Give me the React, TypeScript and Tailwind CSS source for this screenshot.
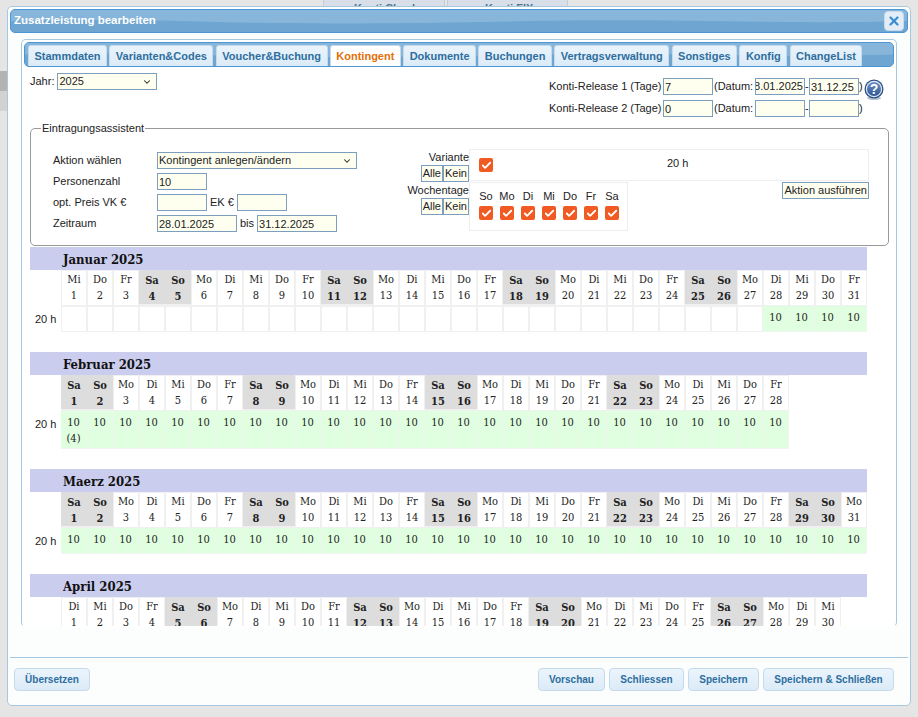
import { Check, ChevronDown, X } from "lucide-react";

const tabs = ["Stammdaten", "Varianten&Codes", "Voucher&Buchung", "Kontingent", "Dokumente", "Buchungen", "Vertragsverwaltung", "Sonstiges", "Konfig", "ChangeList"];
const dayNames = ["So", "Mo", "Di", "Mi", "Do", "Fr", "Sa"];

const months = [
  { title: "Januar 2025", start: 3, days: 31, firstValue: 28 },
  { title: "Februar 2025", start: 6, days: 28, firstValue: 1, note: "(4)" },
  { title: "Maerz 2025", start: 6, days: 31, firstValue: 1 },
  { title: "April 2025", start: 2, days: 30, firstValue: 1 },
];

function Wave() {
  return (
    <svg viewBox="0 0 900 24" preserveAspectRatio="none" className="absolute inset-0 h-full w-full">
      <path d="M0 0H900V12C780 16 660 9 520 12C400 15 280 16 170 12C100 10 50 11 0 12Z" fill="#87b6da" />
    </svg>
  );
}

function Field({ value = "", className = "w-[50px]" }: { value?: string; className?: string }) {
  return (
    <input
      readOnly
      value={value}
      className={`h-[17px] border border-[#7c9ebf] bg-[#ffffef] px-[1px] text-[11px] leading-none text-[#222] outline-none ${className}`}
    />
  );
}

function SelectBox({ value, className }: { value: string; className: string }) {
  return (
    <div className={`flex h-[17px] items-center justify-between border border-[#7c9ebf] bg-[#ffffef] pl-[1px] pr-[4px] text-[11px] text-[#222] ${className}`}>
      <span>{value}</span>
      <ChevronDown className="h-[10px] w-[10px] text-[#222]" strokeWidth={2.5} />
    </div>
  );
}

function MiniButton({ label }: { label: string }) {
  return (
    <span className="flex h-[17px] items-center justify-center border border-[#7c9ebf] bg-[#ffffef] px-[1px] text-[11px] text-[#222]">
      {label}
    </span>
  );
}

function OrangeCheck() {
  return (
    <span className="flex h-[14px] w-[14px] items-center justify-center rounded-[2px] bg-[#f15a22]">
      <Check className="h-[11px] w-[11px] text-white" strokeWidth={4} />
    </span>
  );
}

function FooterButton({ label, className }: { label: string; className: string }) {
  return (
    <button className={`flex h-[23px] items-center justify-center rounded-[4px] border border-[#c5dbec] bg-gradient-to-b from-[#eaf4fc] to-[#dcebf8] text-[10px] font-bold text-[#2e6e9e] ${className}`}>
      {label}
    </button>
  );
}

function HelpIcon() {
  return (
    <svg viewBox="0 0 20 21" className="absolute right-[10px] top-[12px] h-[21px] w-[20px]">
      <defs>
        <linearGradient id="help-fill" x1="0" y1="0" x2="0" y2="1">
          <stop offset="0" stopColor="#6f93c4" />
          <stop offset="1" stopColor="#2c5592" />
        </linearGradient>
      </defs>
      <ellipse cx="10" cy="19" rx="7" ry="2" fill="#b9c3d0" />
      <circle cx="10" cy="10" r="9.5" fill="#2a5088" />
      <circle cx="10" cy="10" r="8.2" fill="#dfe8f3" />
      <circle cx="10" cy="10" r="7" fill="url(#help-fill)" />
      <text x="10" y="15" textAnchor="middle" fontSize="14" fontWeight="700" fill="#fff" fontFamily="Liberation Sans">?</text>
    </svg>
  );
}

function Month({ title, start, days, firstValue, note }: { title: string; start: number; days: number; firstValue: number; note?: string }) {
  const list = Array.from({ length: days }, (_, i) => i + 1);
  return (
    <div className="mb-[20px] w-[837px] font-['DejaVu_Serif_Condensed','DejaVu_Serif',serif] text-[11px] leading-[16px] text-[#222] font-stretch-condensed">
      <div className="h-[23px] bg-[#cbcdee] pl-[33px] text-[13px] font-bold leading-[25px] text-[#111]">{title}</div>
      <div className="flex pl-[31px]">
        {list.map((d) => {
          const name = dayNames[(start + d - 1) % 7];
          const weekend = name === "Sa" || name === "So";
          return (
            <div
              key={d}
              className={
                weekend
                  ? "h-[36px] w-[26px] shrink-0 border-b-2 border-[#f0f0f0] bg-[#dddddd] pt-[3px] text-center font-bold"
                  : "h-[36px] w-[26px] shrink-0 border border-[#f0f0f0] bg-white pt-[1px] text-center"
              }
            >
              {name}
              <br />
              {d}
            </div>
          );
        })}
      </div>
      <div className="flex items-stretch">
        <div className="w-[31px] shrink-0 pl-[5px] pt-[5px] font-['Liberation_Sans',sans-serif] text-[11px]">20 h</div>
        {list.map((d) => (
          <div
            key={d}
            className={
              d >= firstValue
                ? "min-h-[26px] w-[26px] shrink-0 border-r border-b border-[#f0f5f0] bg-[#e0ffe0] pb-[1px] pt-[4px] text-center"
                : "min-h-[26px] w-[26px] shrink-0 border border-[#f0f0f0] bg-white"
            }
          >
            {d >= firstValue && "10"}
            {d === 1 && note && (
              <>
                <br />
                {note}
              </>
            )}
          </div>
        ))}
      </div>
    </div>
  );
}

function Wizard() {
  return (
    <fieldset className="ml-[6px] h-[124px] w-[859px] rounded-[5px] border border-[#999] font-['Liberation_Sans',sans-serif] text-[11px] text-[#222]">
      <legend className="ml-[10px] px-[1px] leading-[12px]">Eintragungsassistent</legend>
      <div className="flex pt-[15px]">
        <div className="w-[377px] pl-[22px] pt-[3px]">
          <div className="flex h-[21px] items-start">
            <span className="w-[104px]">Aktion wählen</span>
            <SelectBox value="Kontingent anlegen/ändern" className="w-[200px]" />
          </div>
          <div className="flex h-[21px] items-start">
            <span className="w-[104px]">Personenzahl</span>
            <Field value="10" />
          </div>
          <div className="flex h-[21px] items-start">
            <span className="w-[104px]">opt. Preis VK €</span>
            <Field />
            <span className="px-[3px]">EK €</span>
            <Field />
          </div>
          <div className="flex h-[21px] items-start">
            <span className="w-[104px]">Zeitraum</span>
            <Field value="28.01.2025" className="w-[80px]" />
            <span className="px-[3px]">bis</span>
            <Field value="31.12.2025" className="w-[80px]" />
          </div>
        </div>
        <div className="flex w-[61px] flex-col items-end pt-[1px]">
          <span className="h-[15px] leading-[15px]">Variante</span>
          <div className="flex">
            <MiniButton label="Alle" />
            <MiniButton label="Kein" />
          </div>
          <span className="mt-px h-[15px] leading-[15px]">Wochentage</span>
          <div className="flex">
            <MiniButton label="Alle" />
            <MiniButton label="Kein" />
          </div>
        </div>
        <div className="w-[400px]">
          <div className="flex h-[32px] items-center border border-[#eee] pl-[9px]">
            <OrangeCheck />
            <span className="mb-[3px] ml-[174px]">20 h</span>
          </div>
          <div className="mt-px flex items-start justify-between">
            <div className="h-[49px] w-[159px] border border-[#eee] px-[9px] pt-[7px]">
              <div className="flex gap-[7px]">
                {dayNames.map((d) => (
                  <div key={d} className="flex w-[14px] flex-col items-center gap-[3px]">
                    <span className="h-[13px] leading-[13px]">{d}</span>
                    <OrangeCheck />
                  </div>
                ))}
              </div>
            </div>
            <MiniButton label="Aktion ausführen" />
          </div>
        </div>
      </div>
    </fieldset>
  );
}

function ReleaseRow({ label, value, from, to }: { label: string; value: string; from?: string; to?: string }) {
  return (
    <div className="flex h-[22px] items-start whitespace-nowrap leading-[17px]">
      <span className="w-[114px]">{label}</span>
      <Field value={value} />
      <span className="ml-px w-[41px]">(Datum:</span>
      <div className="flex h-[17px] w-[50px] items-center justify-end overflow-hidden border border-[#7c9ebf] bg-[#ffffef] pr-px text-[11px]">
        <span className="shrink-0">{from}</span>
      </div>
      <span className="w-[4px]">-</span>
      <Field value={to ?? ""} />
      <span>)</span>
    </div>
  );
}

export default function App() {
  return (
    <div className="relative h-[717px] w-[918px] overflow-hidden bg-[#e5e5e5] font-['Liberation_Sans',sans-serif]">
      <div className="flex gap-[2px] pl-[323px] text-[11px] font-bold text-[#4f7390]">
        <div className="h-[8px] w-[122px] border-x border-[#c5ccd6] bg-[#d8dfe8] pl-[30px] pt-[3px] leading-[11px]">Konti Check</div>
        <div className="h-[8px] w-[121px] border-x border-[#c5ccd6] bg-[#d8dfe8] pl-[37px] pt-[3px] leading-[11px]">Konti FIX</div>
      </div>
      <div className="mt-[63px] h-[20px] w-[7px] bg-[#b3b3b3]" />
      <div className="h-[20px] w-[7px] bg-[#d2d2d2]" />

      <div className="absolute left-[7px] top-[6px] flex h-[700px] w-[904px] flex-col rounded-[5px] border border-[#a6c9e2] bg-[#fcfefe] p-[2px]">
        <div className="relative flex h-[24px] shrink-0 items-center justify-between overflow-hidden rounded-[5px] border border-[#4b97d5] bg-[#6ea6d1] pl-[3px] pr-[3px]">
          <Wave />
          <span className="relative text-[11.5px] font-bold text-white">Zusatzleistung bearbeiten</span>
          <span className="relative flex h-[20px] w-[20px] items-center justify-center rounded-[4px] border border-[#c5dbec] bg-[#e2edf7]">
            <X className="h-[14px] w-[14px] text-[#3f8fd2]" strokeWidth={4} />
          </span>
        </div>

        <div className="ml-[11px] mt-[6px] h-[588px] w-[876px] shrink-0 overflow-hidden rounded-[5px] border border-[#a6c9e2] border-b-transparent bg-white p-[2px]">
          <div className="relative flex h-[25px] items-end gap-[2.3px] overflow-hidden rounded-[5px] border border-[#4b97d5] bg-[#6ea6d1] pl-[3px]">
            <Wave />
            {tabs.map((t) => (
              <span
                key={t}
                className={
                  t === "Kontingent"
                    ? "relative flex h-[21px] items-center rounded-t-[3px] border border-b-0 border-[#c5dbec] bg-white px-[5.5px] text-[11px] font-bold text-[#e17009]"
                    : "relative flex h-[21px] items-center rounded-t-[3px] border border-b-0 border-[#c5dbec] bg-gradient-to-b from-[#e9f3fb] to-[#dcebf8] px-[5.5px] text-[11px] font-bold text-[#2e6e9e]"
                }
              >
                {t}
              </span>
            ))}
          </div>

          <div className="flex h-[55px] justify-between text-[11px] text-[#222]">
            <div className="box-content flex h-[17px] items-center gap-[3px] pl-[6px] pt-[6px]">
              <span>Jahr:</span>
              <SelectBox value="2025" className="w-[100px]" />
            </div>
            <div className="relative w-[345px] pt-[11px]">
              <ReleaseRow label="Konti-Release 1 (Tage)" value="7" from="28.01.2025" to="31.12.25" />
              <ReleaseRow label="Konti-Release 2 (Tage)" value="0" />
              <HelpIcon />
            </div>
          </div>

          <Wizard />

          <div className="ml-[6px] mt-[1px]">
            {months.map((m) => (
              <Month key={m.title} {...m} />
            ))}
          </div>
        </div>

        <div className="mt-[30px] flex h-[49px] items-start justify-between border-t border-[#a6c9e2] px-[4px] pt-[10px]">
          <FooterButton label="Übersetzen" className="w-[76px]" />
          <div className="flex gap-[4px] pr-[10px]">
            <FooterButton label="Vorschau" className="w-[67px]" />
            <FooterButton label="Schliessen" className="w-[75px]" />
            <FooterButton label="Speichern" className="w-[71px]" />
            <FooterButton label="Speichern & Schließen" className="w-[131px]" />
          </div>
        </div>
      </div>
    </div>
  );
}
